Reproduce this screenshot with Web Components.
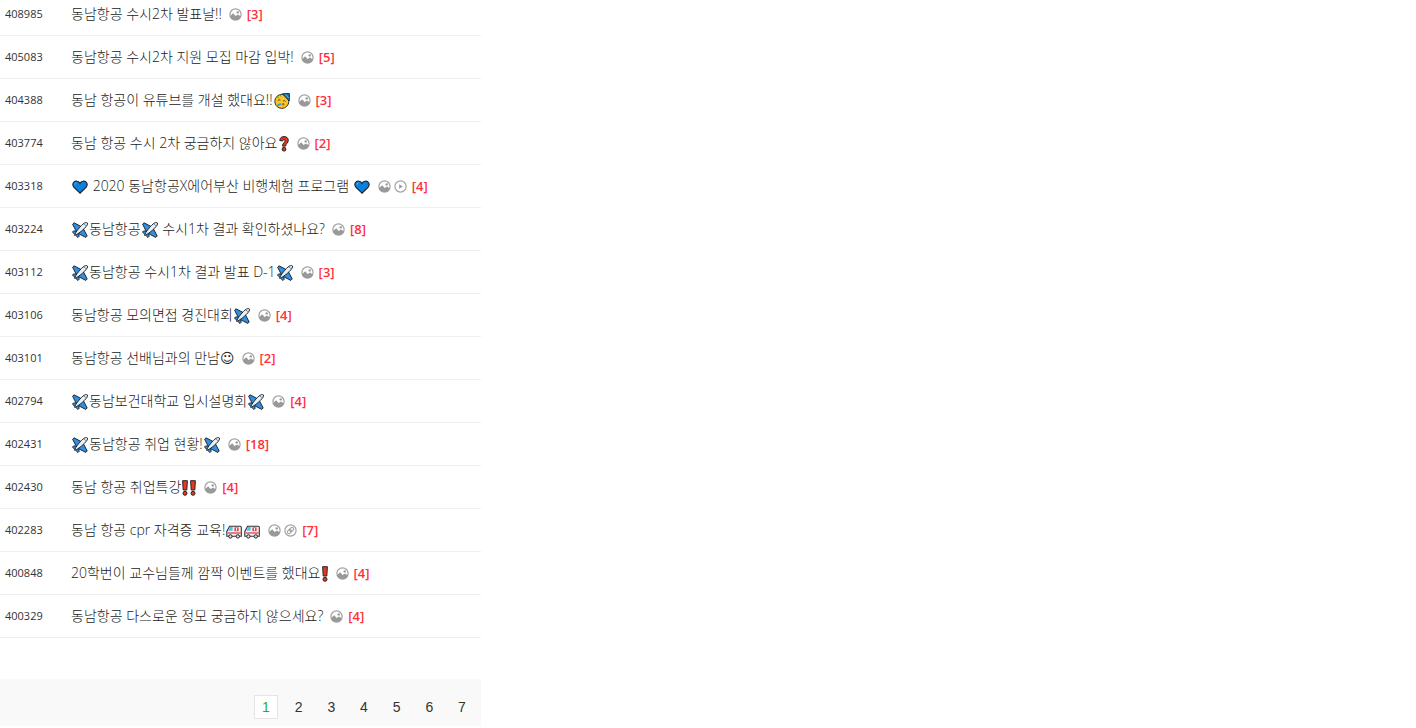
<!DOCTYPE html>
<html lang="ko">
<head>
<meta charset="utf-8">
<title>게시판</title>
<style>
body{margin:0;background:#fff;color:#333;font-family:"Open Sans","Noto Sans CJK KR",sans-serif}
</style>
</head>
<body>
<board-page>
  <post-list></post-list>
  <page-nav current="1" total="7"></page-nav>
</board-page>
<script>
const ICONS = {
  photo: [13, '사진', '<circle cx="6.5" cy="6.5" r="5.6" fill="none" stroke="#a0a0a0" stroke-width="1.2"/><path d="M.9 8.2 4.2 5.2 6.6 8 9 6.6 12 8.4A6 6 0 0 1 .9 8.2Z" fill="#999"/><circle cx="8.7" cy="4.4" r="1.2" fill="#999"/>'],
  video: [13, '동영상', '<circle cx="6.5" cy="6.5" r="5.6" fill="none" stroke="#a3a3a3" stroke-width="1.2"/><path d="M5.2 4.2 8.8 6.5 5.2 8.8Z" fill="#999"/>'],
  link: [13, '링크', '<circle cx="6.5" cy="6.5" r="5.6" fill="none" stroke="#a3a3a3" stroke-width="1.2"/><g transform="rotate(-45 6.5 6.5)" fill="none" stroke="#a3a3a3" stroke-width="1.1"><rect x="2.7" y="4.9" width="4.5" height="3.2" rx="1.6"/><rect x="5.8" y="4.9" width="4.5" height="3.2" rx="1.6"/></g>'],
  plane: [16, '비행기', '<g stroke="#20262c" stroke-linejoin="round"><path d="M10 5 2 .8.6 2.2 4.4 9.6 6.4 8.6ZM11 6 15.2 14 13.8 15.4 6.4 11.6 7.4 9.6Z" fill="#2f8fe4"/><path d="M5 9.4 1.6 8.9.5 10 3.2 12.8 6 15.5 7.1 14.4 6.6 11Z" fill="#2f8fe4"/><path d="M2.6 13.4C3 10.5 9.2 3 12.2 1.2 14 .2 15.8.2 15.5 2 15.2 4.8 6 12.6 2.6 13.4Z" fill="#e8f0f5"/></g><path d="M12.3 2.2 13.8 3.7" stroke="#3c6f8d"/>'],
  heart: [16, '파란 하트', '<path d="M8 14.2 2 8.4C-.9 4.8 2.2 1.5 5.2 2.3 6.7 2.6 7.5 3.5 8 4.4 8.5 3.5 9.3 2.6 10.8 2.3 13.8 1.5 16.9 4.8 14 8.4Z" fill="#0c80dc" stroke="#17202a" stroke-width="1.1"/><path d="M2.8 5.8Q2.8 3.8 4.5 3.7" fill="none" stroke="#58b5f4"/>'],
  party: [16, '파티 얼굴', '<circle cx="7.8" cy="8.4" r="7" fill="#f9c72d" stroke="#382d20"/><path d="M8.5.8 15.4.6 15.2 8Z" fill="#1679c8" stroke="#222"/><path d="M11.5 1.5 14.8 4.8" stroke="#54bceb"/><path d="M3.8 7.6Q5 5.8 6.4 7.2M9 8.2Q10.2 6.8 11.6 8.4" fill="none" stroke="#59401b"/><path d="M1.2 12.8 6.4 10 7.6 11.8 3 13.6Z" fill="#35a5b8"/><path d="M2.5 3.5 5 4.5M6 1.6 7 3.6" stroke="#49a94c"/><circle cx="9.2" cy="11.2" r="1.2" fill="#a26a1c"/>'],
  question: [10, '물음표', '<path d="M.8 4.6C.8 1.8 2.6.6 5 .6 7.6.6 9.3 2 9.3 4.5 9.3 7 6.8 7.4 6.7 10.1H3.5C3.3 7.2 6.1 6.7 6.1 4.8 6.1 3.3 4 3.4 3.9 4.9Z" fill="#dd3520" stroke="#292323"/><circle cx="5" cy="13.2" r="1.9" fill="#dd3520" stroke="#292323"/>'],
  bang: [6, '느낌표', '<path d="M.6.7H5.4L4.8 10H1.2Z" fill="#e33a22" stroke="#292323"/><circle cx="3" cy="13.3" r="2" fill="#e33a22" stroke="#292323"/>'],
  ambulance: [16, '구급차', '<path d="M.8 13.2V8.4L3.6 3.2H14.2Q15.3 3.2 15.3 4.4V13.2Z" fill="#fbeef0" stroke="#303236" stroke-width="1.1"/><path d="M2.2 7.8 4.2 4H6.6V7.8Z" fill="#4bc4e8"/><path d="M1.4 10H14.8" stroke="#e2606b" stroke-width="1.6"/><path d="M8.4 4.4H12.6V8.2H8.4Z" fill="#e0404e"/><path d="M10.5 5V7.6" stroke="#fff"/><circle cx="4.4" cy="13.4" r="1.7" fill="#ddd" stroke="#222"/><circle cx="11.8" cy="13.4" r="1.7" fill="#ddd" stroke="#222"/>']
};
const POSTS = [
  [408985,'동남항공 수시2차 발표날!!','photo',3],
  [405083,'동남항공 수시2차 지원 모집 마감 입박!','photo',5],
  [404388,'동남 항공이 유튜브를 개설 했대요!!{party}','photo',3],
  [403774,'동남 항공 수시 2차 궁금하지 않아요{question}','photo',2],
  [403318,'{heart} 2020 동남항공X에어부산 비행체험 프로그램 {heart}','photo video',4],
  [403224,'{plane}동남항공{plane} 수시1차 결과 확인하셨나요?','photo',8],
  [403112,'{plane}동남항공 수시1차 결과 발표 D-1{plane}','photo',3],
  [403106,'동남항공 모의면접 경진대회{plane}','photo',4],
  [403101,'동남항공 선배님과의 만남<span class="smile">☺</span>','photo',2],
  [402794,'{plane}동남보건대학교 입시설명회{plane}','photo',4],
  [402431,'{plane}동남항공 취업 현황!{plane}','photo',18],
  [402430,'동남 항공 취업특강{bang}{bang}','photo',4],
  [402283,'동남 항공 cpr 자격증 교육!{ambulance}{ambulance}','photo link',7],
  [400848,'20학번이 교수님들께 깜짝 이벤트를 했대요{bang}','photo',4],
  [400329,'동남항공 다스로운 정모 궁금하지 않으세요?','photo',4]
];

customElements.define('board-page', class extends HTMLElement {
  constructor() {
    super();
    this.attachShadow({mode:'open'}).innerHTML = `<style>
      :host{display:block} main{display:flex;flex-direction:column;gap:41px;width:100%;max-width:481px}
    </style><main><slot></slot></main>`;
  }
});

customElements.define('board-icon', class extends HTMLElement {
  connectedCallback() {
    const [w, label, body] = ICONS[this.getAttribute('name')];
    const h = w === 13 ? 13 : 16;
    this.attachShadow({mode:'open'}).innerHTML = `<style>
      :host{display:inline-flex} svg{display:block}
    </style><svg width="${w}" height="${h}" viewBox="0 0 ${w} ${h}" role="img" aria-label="${label}">${body}</svg>`;
  }
});

customElements.define('post-list', class extends HTMLElement {
  connectedCallback() {
    const icon = n => `<board-icon name="${n}"></board-icon>`;
    const rows = POSTS.map(([id, title, marks, count]) => `<tr><td class="id">${id}</td><td><div class="line">
      <a class="title" href="#${id}">${title.replace(/\{(\w+)\}/g, (m, n) => icon(n))}</a>
      <span class="marks">${marks.split(' ').map(icon).join('')}</span>
      <a class="count" href="#${id}-comments">[${count}]</a></div></td></tr>`).join('');
    this.attachShadow({mode:'open'}).innerHTML = `<style>
      :host{display:block}
      table{width:100%;border-collapse:separate;border-spacing:0;table-layout:fixed}
      .num{width:71px}
      td{padding:12px 0;height:18px;border-bottom:1px solid #f0f0f0;vertical-align:middle}
      tr:first-child td{padding-top:5px}
      td.id{padding-left:5px;font-size:11px;line-height:18px}
      .line{display:flex;align-items:center;height:18px;white-space:nowrap}
      a{text-decoration:none;color:inherit}
      .title{font:300 14px/18px "Open Sans","Noto Sans CJK KR",sans-serif;color:#222}
      .title board-icon{vertical-align:-4px;margin:0 1px}
      .smile{font-family:"DejaVu Sans",sans-serif;font-weight:400;line-height:1}
      .marks{display:flex;gap:3px;margin:0 5px 0 7px}
      .count{font-size:13px;line-height:18px;font-weight:600;color:#ff2f3b}
    </style><table aria-label="게시글"><colgroup><col class="num"><col></colgroup><tbody>${rows}</tbody></table>`;
  }
});

customElements.define('page-nav', class extends HTMLElement {
  connectedCallback() {
    const cur = +this.getAttribute('current');
    const links = Array.from({length:+this.getAttribute('total')}, (_, i) =>
      `<a href="#page-${i+1}"${i+1===cur?' aria-current="page"':''}>${i+1}</a>`).join('');
    this.attachShadow({mode:'open'}).innerHTML = `<style>
      :host{display:block;background:#f9f9f9;padding:16px 7px 7px}
      nav{display:flex;justify-content:space-between;width:220px;margin-left:auto}
      a{box-sizing:border-box;width:24px;height:24px;border:1px solid transparent;text-align:center;text-decoration:none;color:#333;font:14px/22px "Liberation Sans",Arial,sans-serif}
      a[aria-current]{background:#fff;border-color:#e5e5e5;color:#2db400}
    </style><nav aria-label="페이지">${links}</nav>`;
  }
});
</script>
</body>
</html>
